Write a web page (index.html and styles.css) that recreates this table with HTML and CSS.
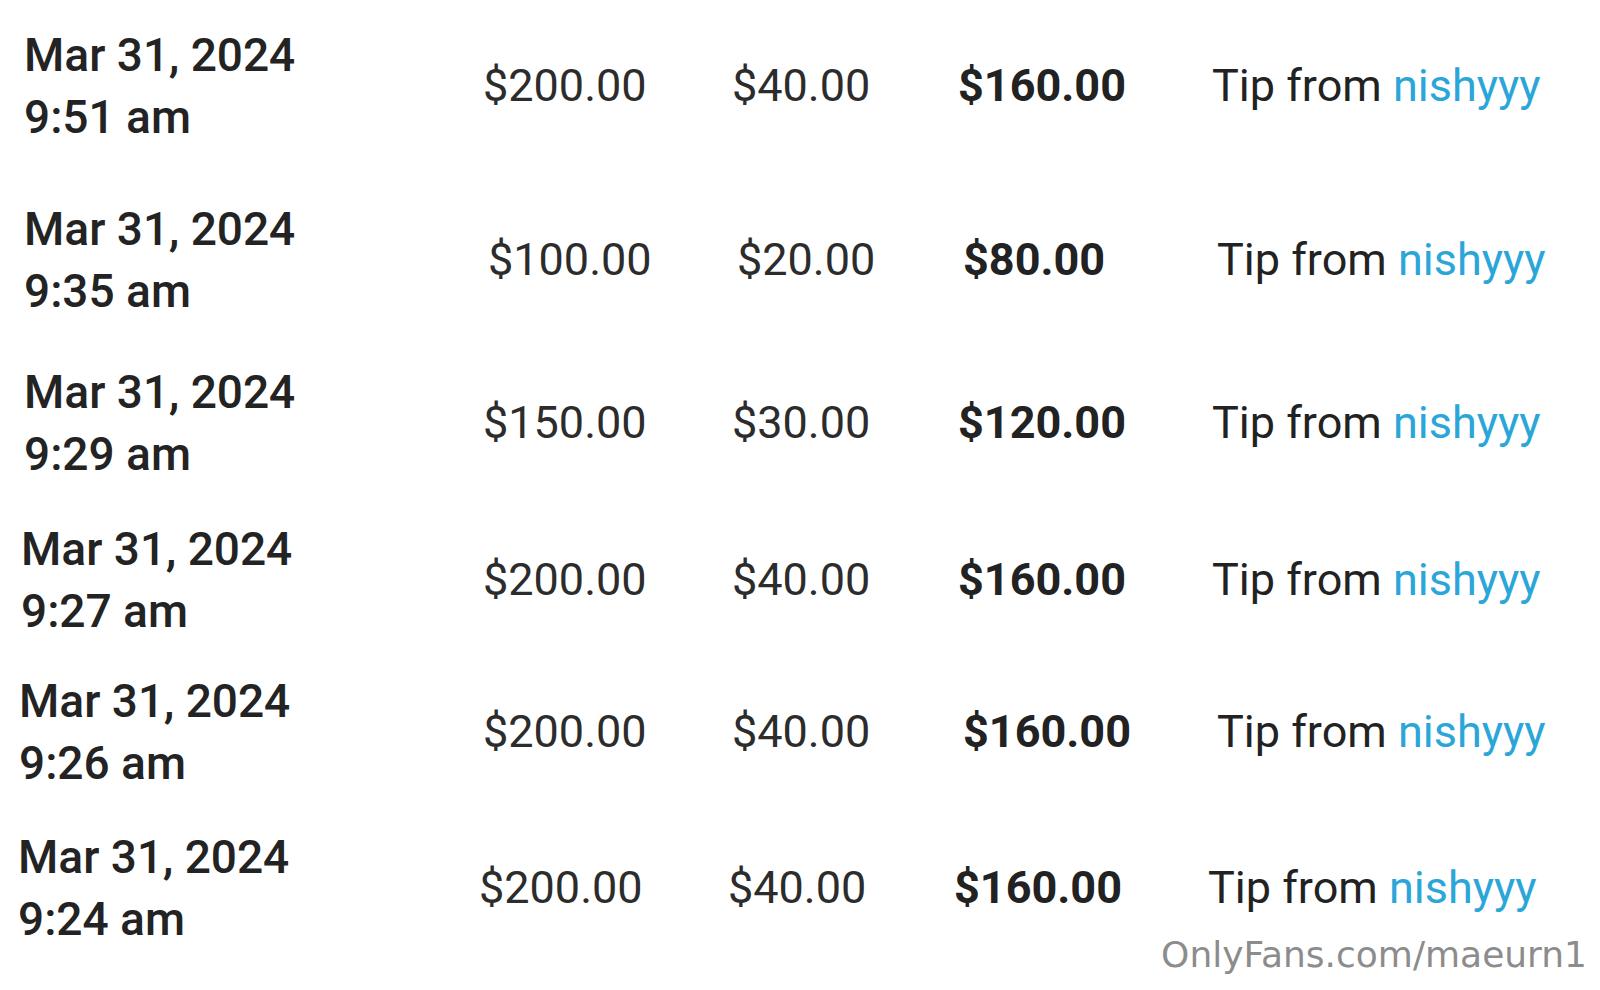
FILE: index.html
```html
<!DOCTYPE html>
<html lang="en">
<head>
<meta charset="utf-8">
<title>Earnings</title>
<link rel="stylesheet" href="styles.css">
</head>
<body>
<main class="statements">
  <div class="row">
    <div class="date">Mar 31, 2024<br>9:51 am</div>
    <div class="amount">$200.00</div>
    <div class="amount">$40.00</div>
    <div class="amount net">$160.00</div>
    <div class="desc">Tip from <a class="user">nishyyy</a></div>
  </div>
  <div class="row">
    <div class="date">Mar 31, 2024<br>9:35 am</div>
    <div class="amount">$100.00</div>
    <div class="amount">$20.00</div>
    <div class="amount net">$80.00</div>
    <div class="desc">Tip from <a class="user">nishyyy</a></div>
  </div>
  <div class="row">
    <div class="date">Mar 31, 2024<br>9:29 am</div>
    <div class="amount">$150.00</div>
    <div class="amount">$30.00</div>
    <div class="amount net">$120.00</div>
    <div class="desc">Tip from <a class="user">nishyyy</a></div>
  </div>
  <div class="row">
    <div class="date">Mar 31, 2024<br>9:27 am</div>
    <div class="amount">$200.00</div>
    <div class="amount">$40.00</div>
    <div class="amount net">$160.00</div>
    <div class="desc">Tip from <a class="user">nishyyy</a></div>
  </div>
  <div class="row">
    <div class="date">Mar 31, 2024<br>9:26 am</div>
    <div class="amount">$200.00</div>
    <div class="amount">$40.00</div>
    <div class="amount net">$160.00</div>
    <div class="desc">Tip from <a class="user">nishyyy</a></div>
  </div>
  <div class="row">
    <div class="date">Mar 31, 2024<br>9:24 am</div>
    <div class="amount">$200.00</div>
    <div class="amount">$40.00</div>
    <div class="amount net">$160.00</div>
    <div class="desc">Tip from <a class="user">nishyyy</a></div>
  </div>
</main>
<div class="watermark">OnlyFans.com/maeurn1</div>
</body>
</html>
```

FILE: styles.css
```css
html, body {
  margin: 0;
  padding: 0;
  background: #ffffff;
}

body {
  width: 1600px;
  height: 990px;
  overflow: hidden;
  position: relative;
  font-family: Roboto, "Liberation Sans", sans-serif;
  color: #222222;
}

.statements {
  display: flex;
  flex-direction: column;
  padding-top: 24px;
}

.row {
  display: grid;
  grid-template-columns: 459px 249px 226px 254px auto;
  align-items: center;
  padding-left: 24px;
  height: 124px;
}

.row:nth-child(2) { margin-top: 50px; }
.row:nth-child(3) { margin-top: 39px; }
.row:nth-child(4) { margin-top: 33px; }
.row:nth-child(5) { margin-top: 28px; }
.row:nth-child(6) { margin-top: 32px; }

.row:nth-child(2) .amount,
.row:nth-child(2) .desc,
.row:nth-child(5) .amount.net,
.row:nth-child(5) .desc {
  transform: translateX(5px);
}

.row:nth-child(4) .date { transform: translateX(-3px); }
.row:nth-child(5) .date { transform: translateX(-5px); }
.row:nth-child(6) .date { transform: translateX(-6px); }
.row:nth-child(6) .amount,
.row:nth-child(6) .desc { transform: translateX(-4px); }

.date {
  font-family: "Roboto Medium", Roboto, "Liberation Sans", sans-serif;
  font-size: 46px;
  font-weight: 500;
  line-height: 62px;
  color: #232323;
  white-space: nowrap;
}

.amount {
  font-size: 45px;
  font-weight: 400;
  line-height: 62px;
  color: #2c2c2c;
  white-space: nowrap;
}

.amount.net {
  font-weight: 700;
  color: #222222;
}

.desc {
  font-size: 45px;
  font-weight: 400;
  line-height: 62px;
  color: #222222;
  white-space: nowrap;
}

.user {
  color: #2ba6d8;
  text-decoration: none;
}

.watermark {
  position: absolute;
  right: 13px;
  top: 935px;
  font-family: "DejaVu Sans", sans-serif;
  font-size: 36px;
  line-height: 40px;
  color: #8c8c8c;
  white-space: nowrap;
}
```
